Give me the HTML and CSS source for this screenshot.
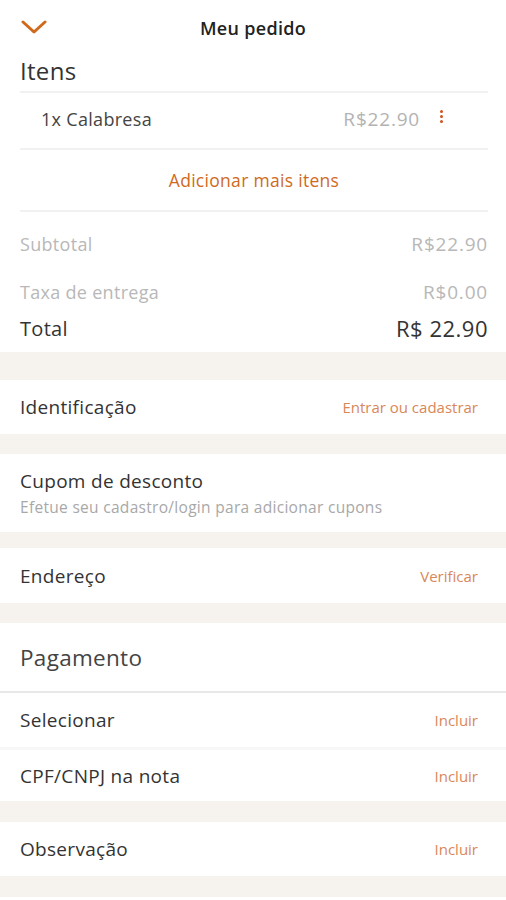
FILE: index.html
```html
<!DOCTYPE html>
<html lang="pt-BR">
<head>
    <meta charset="UTF-8">
    <meta name="viewport" content="width=device-width, initial-scale=1.0">
    <title>Meu pedido</title>
    <link rel="stylesheet" href="styles.css">
</head>
<body>
    <header class="topo">
        <svg class="btn_voltar" width="26" height="14" viewBox="0 0 26 14">
            <path d="M2 2 L13 12 L24 2" fill="none" stroke="#cf6a1c" stroke-width="3" stroke-linecap="round" stroke-linejoin="round"/>
        </svg>
        <h1 class="titulo">Meu pedido</h1>
    </header>

    <section class="bloco itens">
        <h2 class="titulo_secao">Itens</h2>
        <div class="item">
            <span class="item_nome">1x Calabresa</span>
            <span class="item_preco">R$22.90</span>
            <span class="kebab"><i></i><i></i><i></i></span>
        </div>
        <div class="adicionar">Adicionar mais itens</div>
        <div class="resumo">
            <div class="linha_resumo"><span>Subtotal</span><span class="valor">R$22.90</span></div>
            <div class="linha_resumo"><span>Taxa de entrega</span><span class="valor">R$0.00</span></div>
            <div class="linha_resumo total"><span>Total</span><span class="valor">R$ 22.90</span></div>
        </div>
    </section>

    <div class="separador alto"></div>

    <div class="linha">
        <span>Identificação</span>
        <span class="acao">Entrar ou cadastrar</span>
    </div>

    <div class="separador"></div>

    <div class="linha cupom">
        <span>Cupom de desconto</span>
        <span class="dica">Efetue seu cadastro/login para adicionar cupons</span>
    </div>

    <div class="separador baixo"></div>

    <div class="linha endereco">
        <span>Endereço</span>
        <span class="acao">Verificar</span>
    </div>

    <div class="separador"></div>

    <div class="pagamento">Pagamento</div>
    <div class="linha">
        <span>Selecionar</span>
        <span class="acao">Incluir</span>
    </div>
    <div class="linha com_borda">
        <span>CPF/CNPJ na nota</span>
        <span class="acao">Incluir</span>
    </div>

    <div class="separador largo"></div>

    <div class="linha">
        <span>Observação</span>
        <span class="acao">Incluir</span>
    </div>

    <div class="separador largo"></div>
</body>
</html>
```

FILE: styles.css
```css
*{
    margin: 0;
    padding: 0;
    box-sizing: border-box;
}
body{
    width: 506px;
    background-color: #fff;
    font-family: "Open Sans", Lato, sans-serif;
    color: #333;
    letter-spacing: 0.3px;
}
.topo{
    height: 56px;
    display: flex;
    align-items: center;
    justify-content: center;
    position: relative;
}
.btn_voltar{
    position: absolute;
    left: 21px;
    top: 20px;
}
.titulo{
    font-size: 18px;
    font-weight: 600;
    color: #222;
}
.bloco{
    padding: 0 18px 0 20px;
}
.titulo_secao{
    font-size: 24px;
    font-weight: 400;
    color: #333;
    height: 37px;
    line-height: 30px;
    border-bottom: 2px solid #f1f1f1;
}
.item{
    height: 57px;
    display: flex;
    align-items: center;
    padding: 0 0 4px 21px;
    border-bottom: 2px solid #f1f1f1;
    font-size: 18px;
}
.item_nome{
    flex: 1;
    color: #444;
}
.item_preco{
    color: #b3b3b3;
    font-size: 19px;
    letter-spacing: 0.8px;
}
.kebab{
    display: flex;
    flex-direction: column;
    gap: 2px;
    margin: 0 45px 5px 20px;
}
.kebab i{
    width: 3px;
    height: 3px;
    border-radius: 50%;
    background-color: #d0521e;
}
.adicionar{
    height: 62px;
    display: flex;
    align-items: center;
    justify-content: center;
    color: #d06a22;
    font-size: 17.5px;
    border-bottom: 2px solid #f1f1f1;
}
.resumo{
    padding: 8px 0 12px;
}
.linha_resumo{
    display: flex;
    justify-content: space-between;
    height: 48px;
    align-items: center;
    color: #b8b8b8;
    font-size: 18px;
}
.linha_resumo .valor{
    font-size: 19px;
    letter-spacing: 0.8px;
}
.linha_resumo.total{
    height: 24px;
    color: #333;
    font-size: 20px;
}
.linha_resumo.total .valor{
    font-size: 22px;
    letter-spacing: 0.5px;
}
.separador{
    height: 20px;
    background-color: #f6f2ee;
}
.separador.alto{
    height: 28px;
}
.separador.baixo{
    height: 16px;
}
.separador.largo{
    height: 21px;
}
.linha{
    height: 54px;
    display: flex;
    align-items: center;
    justify-content: space-between;
    padding: 0 28px 0 20px;
    font-size: 19px;
    color: #333;
}
.linha.endereco{
    height: 55px;
}
.acao{
    color: #d8875a;
    font-size: 15px;
    letter-spacing: 0;
}
.linha.cupom{
    height: 78px;
    flex-direction: column;
    align-items: flex-start;
    justify-content: center;
    gap: 2px;
}
.dica{
    color: #a8a8a8;
    font-size: 15.5px;
}
.pagamento{
    height: 70px;
    display: flex;
    align-items: center;
    padding: 0 20px;
    font-size: 22.5px;
    color: #444;
    border-bottom: 2px solid #e8e8e8;
}
.com_borda{
    border-top: 3px solid #f7f7f7;
}
```
